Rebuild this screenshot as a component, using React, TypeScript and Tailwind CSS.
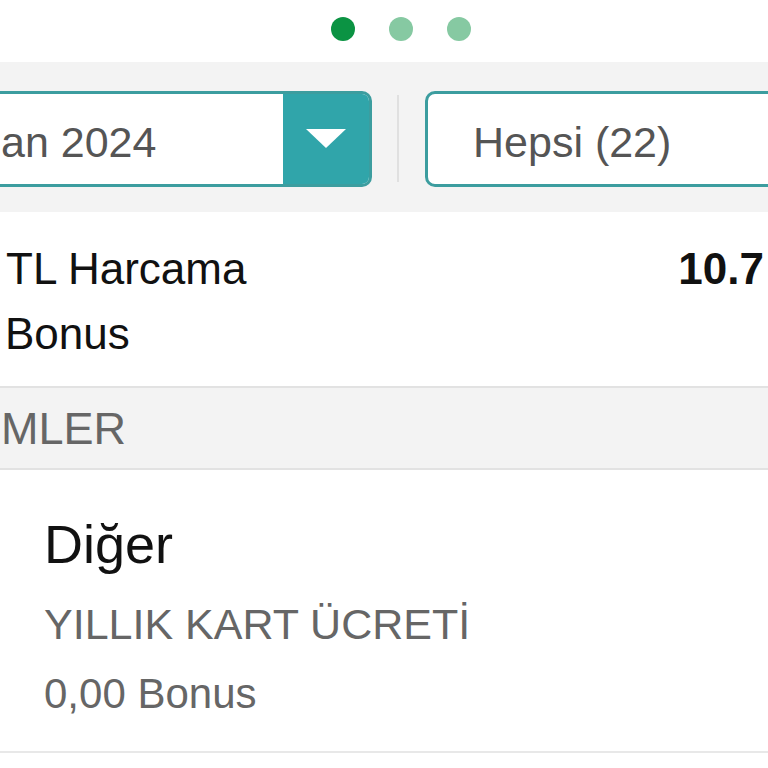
import React from "react";

export default function App() {
  return (
    <div className="w-[768px] h-[768px] overflow-hidden bg-white font-['Liberation_Sans',Arial,sans-serif]">
      {/* pager dots */}
      <div className="h-[62px] flex items-start pt-[17px] pl-[331px] gap-[34px]">
        <div className="w-[24px] h-[24px] rounded-full bg-[#0b9343]" />
        <div className="w-[24px] h-[24px] rounded-full bg-[#86c9a2]" />
        <div className="w-[24px] h-[24px] rounded-full bg-[#86c9a2]" />
      </div>

      {/* filter band */}
      <div className="h-[150px] bg-[#f3f3f3] flex items-start pt-[29px]">
        <div className="ml-[-110px] w-[482px] h-[96px] shrink-0 border-[3px] border-[#3c9d9f] rounded-[10px] bg-white flex overflow-hidden">
          <div className="flex-1 flex items-center pl-[45px] pt-[6px] text-[43px] text-[#555] whitespace-nowrap">
            <span className="ml-[63px]">an 2024</span>
          </div>
          <div className="w-[86px] bg-[#30a5aa] flex items-center justify-center">
            <svg width="40" height="20" viewBox="0 0 40 20">
              <polygon points="0,0 40,0 20,19" fill="#ffffff" />
            </svg>
          </div>
        </div>
        <div className="ml-[25px] mt-[4px] w-[2px] h-[87px] shrink-0 bg-[#e0e0e0]" />
        <div className="ml-[26px] w-[420px] h-[96px] shrink-0 border-[3px] border-[#3c9d9f] rounded-[10px] bg-white flex items-center pl-[45px] pt-[6px] text-[43px] text-[#555] whitespace-nowrap">
          Hepsi (22)
        </div>
      </div>

      {/* summary */}
      <div className="pt-[24px] pb-[20px] text-[44px] leading-[65px] text-[#111]">
        <div className="flex whitespace-nowrap">
          <span className="pl-[6px]">TL Harcama</span>
          <span className="ml-auto font-bold pr-[4px]">10.7</span>
        </div>
        <div className="pl-[5px]">Bonus</div>
      </div>

      {/* section header */}
      <div className="h-[84px] border-y-2 border-[#e2e2e2] bg-[#f3f3f3] pt-[10px]">
        <div className="ml-[1px] text-[45px] leading-[62px] text-[#666]">MLER</div>
      </div>

      {/* item */}
      <div className="pl-[44px] pt-[43px] pb-[32px] border-b-2 border-[#e8e8e8]">
        <div className="text-[54px] leading-[62px] text-[#111]">Diğer</div>
        <div className="mt-[24px] text-[43px] leading-[50px] text-[#666] whitespace-nowrap">YILLIK KART ÜCRETİ</div>
        <div className="mt-[20px] text-[42px] leading-[50px] text-[#666]">0,00 Bonus</div>
      </div>
    </div>
  );
}
